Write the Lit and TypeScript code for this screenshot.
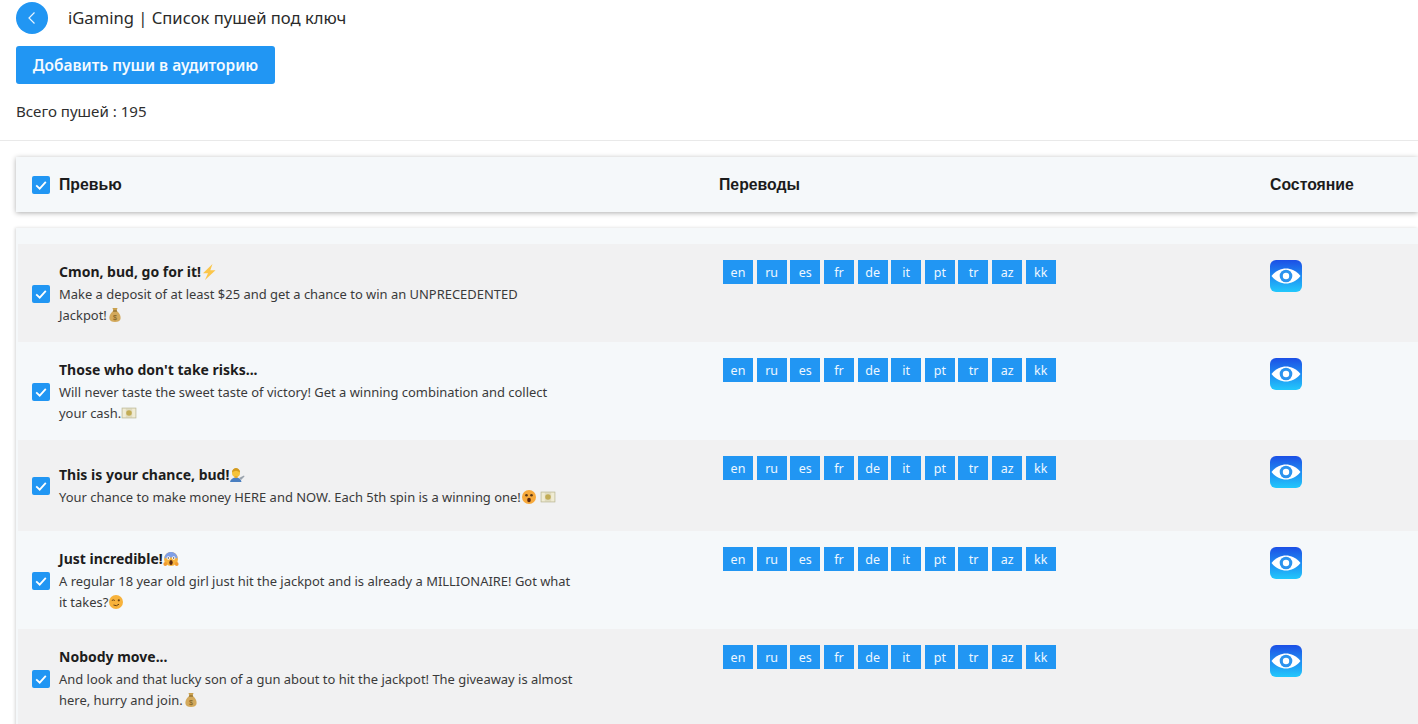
import { LitElement, html, css, svg } from "lit";
import { customElement } from "lit/decorators.js";

const bolt = svg`<path d="M11.500 0 2 9.200h5L4 16 14.500 6.300H9.300z" fill="#fbc64a"/>`;
const bag = svg`<path d="M5.500 1h5L9.500 4h-3z" fill="#c9a04e"/><path d="M6 4h4c3 2.500 4 5.500 3.500 8-.4 2-2.500 3-5.500 3s-5.100-1-5.500-3C2 9.500 3 6.500 6 4z" fill="#d3a95c"/><rect x="6" y="3.400" width="4" height="1.200" fill="#8a6a2c"/><text x="8" y="12.500" font-size="7" text-anchor="middle" fill="#7a5a20" font-family="Liberation Sans">$</text>`;
const notes = svg`<rect x="1" y="3" width="14" height="10" fill="#e0dcc0" stroke="#b5b28c" stroke-width=".6"/><rect x="1.800" y="3.800" width="3" height="8.400" fill="#f0ecd4"/><rect x="11.200" y="3.800" width="3" height="8.400" fill="#f0ecd4"/><circle cx="8" cy="8" r="2.800" fill="#c2ac55"/>`;
const man = svg`<path d="M1 15c.5-3 3-4.500 6-4.500s5 1.500 5.500 4.500z" fill="#4a7fc1"/><circle cx="7" cy="6" r="4" fill="#f5c33b"/><path d="M3 5.500C3 2.500 5 1 7 1s4 1.500 4 4.500C9.500 4.500 8 3.800 7 3.800S4.500 4.500 3 5.500z" fill="#d39a1e"/><path d="M10 11l5-2.500 .5 1L12 13z" fill="#9aa3ad"/><rect x="5.500" y="9" width="3" height="2" fill="#e7ac2e"/>`;
const wow = svg`<circle cx="8" cy="8" r="7" fill="#f7a93b"/><circle cx="5.500" cy="6.200" r="1.300" fill="#5b3a1a"/><circle cx="10.500" cy="6.200" r="1.300" fill="#5b3a1a"/><ellipse cx="8" cy="11" rx="1.800" ry="2.200" fill="#5b2a12"/>`;
const scream = svg`<circle cx="8" cy="8" r="7" fill="#f7b23b"/><path d="M1.500 7.500C1.500 3.500 4.500 1 8 1s6.500 2.500 6.500 6.500c-2-1.500-11-1.500-13 0z" fill="#7f9fe6"/><circle cx="5.300" cy="7" r="1.700" fill="#fff"/><circle cx="10.700" cy="7" r="1.700" fill="#fff"/><circle cx="5.300" cy="7" r=".7" fill="#333"/><circle cx="10.700" cy="7" r=".7" fill="#333"/><ellipse cx="8" cy="11.500" rx="1.700" ry="2.600" fill="#5b2a12"/><circle cx="2.300" cy="13" r="1.900" fill="#f29a2e"/><circle cx="13.700" cy="13" r="1.900" fill="#f29a2e"/>`;
const wink = svg`<circle cx="8" cy="8" r="7" fill="#f7b23b"/><path d="M3.800 6.500q1.500-1.200 3 0" stroke="#6b4313" fill="none" stroke-width="1"/><circle cx="10.800" cy="6.300" r="1.100" fill="#6b4313"/><path d="M5.500 11q3 1.800 5.500-.8" stroke="#6b4313" fill="none" stroke-width="1"/>`;

const em = (s: unknown) => html`<svg class="emoji" viewBox="0 0 16 16">${s}</svg>`;
const langs = ["en", "ru", "es", "fr", "de", "it", "pt", "tr", "az", "kk"];
const check = html`<svg class="check" viewBox="0 0 18 18"><path d="M4.200 9.300 7.700 12.600 13.800 5.800" fill="none" stroke="#fff" stroke-width="1.800"/></svg>`;

const rows = [
  { t: html`Cmon, bud, go for it!${em(bolt)}`, b: html`Make a deposit of at least $25 and get a chance to win an UNPRECEDENTED<br />Jackpot!${em(bag)}` },
  { t: html`Those who don't take risks...`, b: html`Will never taste the sweet taste of victory! Get a winning combination and collect<br />your cash.${em(notes)}` },
  { t: html`This is your chance, bud!${em(man)}`, b: html`Your chance to make money HERE and NOW. Each 5th spin is a winning one!${em(wow)} ${em(notes)}` },
  { t: html`Just incredible!${em(scream)}`, b: html`A regular 18 year old girl just hit the jackpot and is already a MILLIONAIRE! Got what<br />it takes?${em(wink)}` },
  { t: html`Nobody move...`, b: html`And look and that lucky son of a gun about to hit the jackpot! The giveaway is almost<br />here, hurry and join.${em(bag)}` },
];

@customElement("app-root")
export class AppRoot extends LitElement {
  static styles = css`
    :host { display: block; height: 724px; overflow: hidden; background: #fff; color: #222; font-family: "Noto Sans", sans-serif; }
    .top { padding: 2px 16px 0; height: 141px; box-sizing: border-box; border-bottom: 1px solid #e9e9e9; }
    .head { display: flex; align-items: center; height: 32px; gap: 20px; }
    .back { width: 32px; height: 32px; border-radius: 50%; background: #2196f3; display: flex; align-items: center; justify-content: center; }
    .back svg { width: 14px; height: 14px; }
    .title { font-size: 16.600px; color: #2a2a2a; position: relative; top: -1px; }
    .btn { display: flex; align-items: center; justify-content: center; margin-top: 12px; width: 259px; height: 38px; border: 0; padding: 0; border-radius: 3px; background: #2196f3; color: #f4faff; font: 600 15.500px "Noto Sans", sans-serif; }
    .total { margin-top: 17px; font-size: 15.100px; line-height: 20px; color: #2e2e2e; }
    .table { padding: 16px 0 0 16px; }
    .thead, .row { display: grid; }
    .thead { grid-template-columns: 43px 660px 551px 1fr; height: 55px; align-items: center; background: #f5f8fa; box-shadow: 0 1px 5px rgba(0,0,0,.32); font: 700 15.800px "Liberation Sans", sans-serif; color: #1c1c1c; }
    .thead .box { margin-left: 16px; }
    .tbody { margin-top: 16px; padding-top: 16px; background: #f5f8fa; box-shadow: -1px 0 3px rgba(0,0,0,.16); }
    .row { margin-left: 2px; grid-template-columns: 41px 664px 547px 1fr; min-height: 91px; padding: 16px 0; box-sizing: border-box; }
    .row:nth-child(odd) { background: #f1f1f2; }
    .box { width: 18px; height: 18px; border-radius: 2px; background: #2196f3; display: block; }
    .check { display: block; width: 18px; height: 18px; }
    .cell-check { align-self: center; padding: 1px 0 0 14px; }
    .text { align-self: center; width: 540px; }
    .rtitle { font-size: 14px; line-height: 24px; font-weight: 700; color: #1d1d1d; }
    .rbody { font-size: 12.950px; line-height: 21px; color: #3a3a3a; }
    .emoji { width: 16px; height: 16px; vertical-align: -3px; }
    .chips { display: flex; gap: 3.650px; align-self: start; }
    .chip { width: 30px; height: 24px; display: flex; align-items: center; justify-content: center; background: #2196f3; color: #eef7ff; font-size: 12.500px; }
    .eye { width: 32px; height: 32px; display: block; }
  `;

  render() {
    return html`
      <div class="top">
        <div class="head">
          <div class="back"><svg viewBox="0 0 14 14"><path d="M9.500 1.500 4 7l5.500 5.500" fill="none" stroke="#e8f4ff" stroke-width="1.200"/></svg></div>
          <div class="title">iGaming | Список пушей под ключ</div>
        </div>
        <button class="btn">Добавить пуши в аудиторию</button>
        <div class="total">Всего пушей : 195</div>
      </div>
      <div class="table">
        <div class="thead">
          <div><span class="box">${check}</span></div>
          <div>Превью</div>
          <div>Переводы</div>
          <div>Состояние</div>
        </div>
        <div class="tbody">
          ${rows.map(r => html`
            <div class="row">
              <div class="cell-check"><span class="box">${check}</span></div>
              <div class="text">
                <div class="rtitle">${r.t}</div>
                <div class="rbody">${r.b}</div>
              </div>
              <div class="chips">${langs.map(l => html`<span class="chip">${l}</span>`)}</div>
              <svg class="eye" viewBox="0 0 32 32">
                <defs><linearGradient id="g" x1="0" y1="0" x2="0" y2="1"><stop offset="0" stop-color="#1c4fe6"/><stop offset="1" stop-color="#22c8fc"/></linearGradient></defs>
                <rect width="32" height="32" rx="6" fill="url(#g)"/>
                <path d="M1.500 16C6 10.500 11 8.500 16 8.500S26 10.500 30.500 16C26 21.500 21 23.500 16 23.500S6 21.500 1.500 16z" fill="#fff"/>
                <circle cx="16" cy="16" r="6.300" fill="#2b93ee"/><circle cx="16" cy="16" r="3.200" fill="#fff"/>
              </svg>
            </div>`)}
        </div>
      </div>
    `;
  }
}
